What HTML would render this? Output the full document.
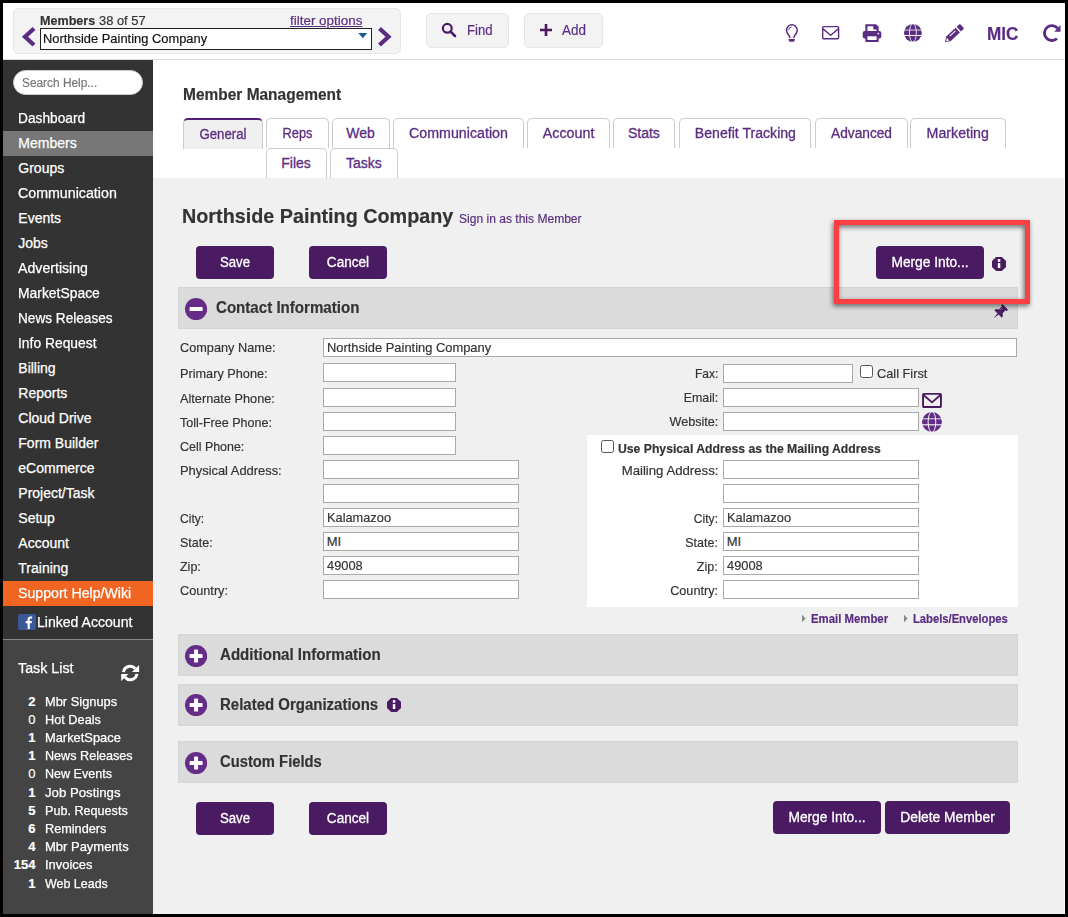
<!DOCTYPE html>
<html lang="en"><head><meta charset="utf-8"><title>Member Management</title>
<style>
html,body{margin:0;padding:0;}
body{width:1068px;height:917px;background:#000;position:relative;overflow:hidden;font-family:"Liberation Sans",sans-serif;}
.t{position:absolute;white-space:nowrap;-webkit-text-stroke-width:.18px;}
.sb,.tk{-webkit-text-stroke-width:.25px;}
.tab,.btn{-webkit-text-stroke-width:.3px;}
</style></head><body>
<div style="position:absolute;left:3px;top:3px;width:1062px;height:911px;background:#fff;"></div>
<div style="position:absolute;left:3px;top:59px;width:1061px;height:1px;background:#d9d9d9;"></div>
<div style="position:absolute;left:153px;top:178px;width:911px;height:736px;background:#f0f0f0;"></div>
<div style="position:absolute;left:3px;top:60px;width:150px;height:580px;background:#333;"></div>
<div style="position:absolute;left:3px;top:640px;width:150px;height:274px;background:#444;"></div>
<div style="position:absolute;left:3px;top:639px;width:150px;height:1px;background:#888;"></div>
<div style="position:absolute;left:13px;top:8px;width:388px;height:46px;box-sizing:border-box;background:#f3f3f3;border:1px solid #e6e6e6;border-radius:5px;"></div>
<svg style="position:absolute;left:20px;top:25px" width="18" height="24" viewBox="0 0 18 24"><polyline points="14,3.5 5,11.8 14,20" fill="none" stroke="#5b2d82" stroke-width="4.2"/></svg>
<svg style="position:absolute;left:375px;top:25px" width="18" height="24" viewBox="0 0 18 24"><polyline points="4.5,3.5 13.5,11.8 4.5,20" fill="none" stroke="#5b2d82" stroke-width="4.2"/></svg>
<div class="t" style="left:40.0px;top:11.60px;font-size:13px;line-height:17px;font-weight:bold;color:#333;transform:scaleX(0.9671);transform-origin:left center;">Members</div>
<div class="t" style="left:99.3px;top:11.60px;font-size:13px;line-height:17px;font-weight:normal;color:#333;transform:scaleX(0.9915);transform-origin:left center;">38 of 57</div>
<div class="t" style="left:290px;top:11.60px;font-size:13px;line-height:17px;font-weight:normal;color:#5b2d82;text-decoration:underline;transform:scaleX(1.0329);transform-origin:left center;">filter options</div>
<div style="position:absolute;left:40px;top:28px;width:332px;height:22px;box-sizing:border-box;background:#fff;border:1px solid #222;"></div>
<div class="t" style="left:43.3px;top:29.90px;font-size:13px;line-height:17px;font-weight:normal;color:#111;transform:scaleX(0.9916);transform-origin:left center;">Northside Painting Company</div>
<svg style="position:absolute;left:358px;top:33px" width="10" height="6" viewBox="0 0 10 6"><polygon points="0.3,0 9.3,0 4.8,5.2" fill="#14608f"/></svg>
<div style="position:absolute;left:426px;top:13px;width:83px;height:35px;box-sizing:border-box;background:#f3f3f3;border:1px solid #e6e6e6;border-radius:5px;"></div>
<div style="position:absolute;left:524px;top:13px;width:79px;height:35px;box-sizing:border-box;background:#f3f3f3;border:1px solid #e6e6e6;border-radius:5px;"></div>
<svg style="position:absolute;left:441px;top:22px" width="16" height="16" viewBox="0 0 16 16"><circle cx="6.3" cy="6.3" r="4.4" fill="none" stroke="#4a1b63" stroke-width="2.2"/><line x1="9.6" y1="9.6" x2="14" y2="14" stroke="#4a1b63" stroke-width="2.6" stroke-linecap="round"/></svg>
<div class="t" style="left:466.6px;top:21.15px;font-size:14px;line-height:18px;font-weight:normal;color:#5b2d82;transform:scaleX(0.9400);transform-origin:left center;">Find</div>
<svg style="position:absolute;left:539px;top:23px" width="14" height="14" viewBox="0 0 14 14"><path d="M7 1v12M1 7h12" stroke="#4a1b63" stroke-width="2.6" fill="none"/></svg>
<div class="t" style="left:562.4px;top:21.15px;font-size:14px;line-height:18px;font-weight:normal;color:#5b2d82;transform:scaleX(0.9630);transform-origin:left center;">Add</div>
<svg style="position:absolute;left:784px;top:23px" width="16" height="20" viewBox="0 0 16 20"><path d="M5.900 14.900C5.900 12.300 2.520 11 2.520 7.200A5.350 5.350 0 0 1 13.220 7.200C13.220 11 9.800 12.300 9.800 14.900" fill="none" stroke="#5b2d82" stroke-width="1.500"/><path d="M4.500 16h6.500l-.6 2.100c-.1.400-.5.600-.9.600h-3.500c-.4 0-.8-.2-.9-.6z" fill="#5b2d82"/><path d="M4.600 7.200A3.300 3.300 0 0 1 7.600 4" fill="none" stroke="#5b2d82" stroke-width=".9"/></svg>
<svg style="position:absolute;left:820px;top:25.300px" width="22" height="16" viewBox="0 0 22 16"><rect x="2.700" y="1.600" width="15.900" height="12.200" rx="1" fill="none" stroke="#5b2d82" stroke-width="1.400"/><path d="M3 3.900l7.650 6.300 7.650-6.300" fill="none" stroke="#5b2d82" stroke-width="1.400" stroke-linejoin="round"/></svg>
<svg style="position:absolute;left:862px;top:23px" width="20" height="20" viewBox="0 0 20 20"><path d="M4.400 8.500v-6.300h9.200l2 2v4.300" fill="none" stroke="#5b2d82" stroke-width="2.100"/><path d="M11.300 2.200h2.300l2 2v2.200h-4.300z" fill="#5b2d82"/><rect x="0.700" y="8" width="18.600" height="7.600" rx="2" fill="#5b2d82"/><rect x="4.400" y="12.300" width="11.200" height="5.700" fill="#fff" stroke="#5b2d82" stroke-width="2"/><circle cx="16.300" cy="10.600" r="0.900" fill="#fff"/></svg>
<svg style="position:absolute;left:904px;top:24.2px" width="17.8" height="17.8" viewBox="0 0 20 20"><circle cx="10" cy="10" r="10" fill="#5b2d82"/><g fill="none" stroke="#fff"><ellipse cx="10" cy="10" rx="3.850" ry="10.400" stroke-width=".95"/><path d="M0 6.800h20" stroke-width="1.200" stroke-opacity=".7"/><path d="M0 12.900h20" stroke-width="1.100"/></g></svg>
<svg style="position:absolute;left:945.200px;top:41.700px;overflow:visible" width="1" height="1"><g transform="rotate(-43)"><path d="M0 0L4.600-3.150H17.400V3.150H4.600z" fill="#5b2d82"/><path d="M18.900-3.150h3.200c.700 0 1.250.550 1.250 1.250v3.800c0 .700-.550 1.250-1.250 1.250h-3.200z" fill="#5b2d82"/><path d="M1.900-.250L4.300-1.900V1.900L1.900.250z" fill="#fff"/><path d="M7.400-1.050h7.800" stroke="#fff" stroke-width=".95" fill="none"/></g></svg>
<div class="t" style="left:986.7px;top:22.56px;font-size:18px;line-height:23px;font-weight:bold;color:#5b2d82;transform:scaleX(0.9545);transform-origin:left center;">MIC</div>
<svg style="position:absolute;left:1042px;top:23px" width="20" height="20" viewBox="0 0 20 20"><path d="M14.980 15.550A7.450 7.450 0 1 1 15.600 5.300" fill="none" stroke="#5b2d82" stroke-width="2.900"/><path d="M18.500 2v6.700h-6.200z" fill="#5b2d82"/></svg>
<div style="position:absolute;left:13.4px;top:70.1px;width:129.2px;height:25.4px;box-sizing:border-box;background:#fff;border:1px solid #ccc;border-radius:13px;"></div>
<div class="t" style="left:22.3px;top:75.24px;font-size:12px;line-height:16px;font-weight:normal;color:#777;transform:scaleX(0.9889);transform-origin:left center;">Search Help...</div>
<div style="position:absolute;left:3px;top:131px;width:150px;height:25px;background:#777;"></div>
<div style="position:absolute;left:3px;top:581px;width:150px;height:25px;background:#f06522;"></div>
<div class="t sb" style="left:18.3px;top:109.35px;font-size:14px;line-height:18px;font-weight:normal;color:#fff;transform:scaleX(0.9796);transform-origin:left center;">Dashboard</div>
<div class="t sb" style="left:18.3px;top:134.35px;font-size:14px;line-height:18px;font-weight:normal;color:#fff;">Members</div>
<div class="t sb" style="left:18.3px;top:159.35px;font-size:14px;line-height:18px;font-weight:normal;color:#fff;">Groups</div>
<div class="t sb" style="left:18.3px;top:184.35px;font-size:14px;line-height:18px;font-weight:normal;color:#fff;transform:scaleX(1.0158);transform-origin:left center;">Communication</div>
<div class="t sb" style="left:18.3px;top:209.35px;font-size:14px;line-height:18px;font-weight:normal;color:#fff;">Events</div>
<div class="t sb" style="left:18.3px;top:234.35px;font-size:14px;line-height:18px;font-weight:normal;color:#fff;">Jobs</div>
<div class="t sb" style="left:18.3px;top:259.35px;font-size:14px;line-height:18px;font-weight:normal;color:#fff;transform:scaleX(1.0106);transform-origin:left center;">Advertising</div>
<div class="t sb" style="left:18.3px;top:284.35px;font-size:14px;line-height:18px;font-weight:normal;color:#fff;transform:scaleX(0.9917);transform-origin:left center;">MarketSpace</div>
<div class="t sb" style="left:18.3px;top:309.35px;font-size:14px;line-height:18px;font-weight:normal;color:#fff;transform:scaleX(0.9726);transform-origin:left center;">News Releases</div>
<div class="t sb" style="left:18.3px;top:334.35px;font-size:14px;line-height:18px;font-weight:normal;color:#fff;transform:scaleX(0.9888);transform-origin:left center;">Info Request</div>
<div class="t sb" style="left:18.3px;top:359.35px;font-size:14px;line-height:18px;font-weight:normal;color:#fff;">Billing</div>
<div class="t sb" style="left:18.3px;top:384.35px;font-size:14px;line-height:18px;font-weight:normal;color:#fff;">Reports</div>
<div class="t sb" style="left:18.3px;top:409.35px;font-size:14px;line-height:18px;font-weight:normal;color:#fff;">Cloud Drive</div>
<div class="t sb" style="left:18.3px;top:434.35px;font-size:14px;line-height:18px;font-weight:normal;color:#fff;">Form Builder</div>
<div class="t sb" style="left:18.3px;top:459.35px;font-size:14px;line-height:18px;font-weight:normal;color:#fff;">eCommerce</div>
<div class="t sb" style="left:18.3px;top:484.35px;font-size:14px;line-height:18px;font-weight:normal;color:#fff;">Project/Task</div>
<div class="t sb" style="left:18.3px;top:509.35px;font-size:14px;line-height:18px;font-weight:normal;color:#fff;">Setup</div>
<div class="t sb" style="left:18.3px;top:534.35px;font-size:14px;line-height:18px;font-weight:normal;color:#fff;">Account</div>
<div class="t sb" style="left:18.3px;top:559.35px;font-size:14px;line-height:18px;font-weight:normal;color:#fff;">Training</div>
<div class="t sb" style="left:18.3px;top:584.35px;font-size:14px;line-height:18px;font-weight:normal;color:#fff;transform:scaleX(1.0103);transform-origin:left center;">Support Help/Wiki</div>
<div style="position:absolute;left:18px;top:614px;width:18px;height:16px;background:#3b5998;border-radius:2px;"><svg width="18" height="16" viewBox="0 0 18 16"><path d="M9.600 15v-5.700h-1.900v-2.200h1.900v-1.700c0-1.900 1.100-3 2.800-3 .8 0 1.500.1 1.700.1v2h-1.200c-.9 0-1.100.5-1.100 1.100v1.500h2.200l-.3 2.200h-1.900v5.700z" fill="#fff"/></svg></div>
<div class="t sb" style="left:37.3px;top:612.95px;font-size:14px;line-height:18px;font-weight:normal;color:#fff;transform:scaleX(1.0045);transform-origin:left center;">Linked Account</div>
<div class="t sb" style="left:18.3px;top:658.95px;font-size:14px;line-height:18px;font-weight:normal;color:#fff;transform:scaleX(1.0189);transform-origin:left center;">Task List</div>
<svg style="position:absolute;left:121px;top:664px" width="19" height="18" viewBox="0 0 19 18"><g fill="none" stroke="#fff" stroke-width="3"><path d="M2.500 8.100A6.700 6.700 0 0 1 14.330 4.690"/><path d="M15.900 9.900A6.700 6.700 0 0 1 4.070 13.310"/></g><path d="M18.100.900v7.100h-7.100z" fill="#fff"/><path d="M.200 17.100v-7h7.200z" fill="#fff"/></svg>
<div class="t" style="right:1032.6px;top:692.60px;font-size:13px;line-height:17px;font-weight:bold;color:#fff;">2</div>
<div class="t tk" style="left:45.3px;top:692.60px;font-size:13px;line-height:17px;font-weight:normal;color:#fff;transform:scaleX(0.9893);transform-origin:left center;">Mbr Signups</div>
<div class="t" style="right:1032.6px;top:710.80px;font-size:13px;line-height:17px;font-weight:normal;color:#fff;">0</div>
<div class="t tk" style="left:45.3px;top:710.80px;font-size:13px;line-height:17px;font-weight:normal;color:#fff;transform:scaleX(0.9794);transform-origin:left center;">Hot Deals</div>
<div class="t" style="right:1032.6px;top:729.00px;font-size:13px;line-height:17px;font-weight:bold;color:#fff;">1</div>
<div class="t tk" style="left:45.3px;top:729.00px;font-size:13px;line-height:17px;font-weight:normal;color:#fff;transform:scaleX(0.9896);transform-origin:left center;">MarketSpace</div>
<div class="t" style="right:1032.6px;top:747.20px;font-size:13px;line-height:17px;font-weight:bold;color:#fff;">1</div>
<div class="t tk" style="left:45.3px;top:747.20px;font-size:13px;line-height:17px;font-weight:normal;color:#fff;transform:scaleX(0.9698);transform-origin:left center;">News Releases</div>
<div class="t" style="right:1032.6px;top:765.40px;font-size:13px;line-height:17px;font-weight:normal;color:#fff;">0</div>
<div class="t tk" style="left:45.3px;top:765.40px;font-size:13px;line-height:17px;font-weight:normal;color:#fff;transform:scaleX(0.9658);transform-origin:left center;">New Events</div>
<div class="t" style="right:1032.6px;top:783.60px;font-size:13px;line-height:17px;font-weight:bold;color:#fff;">1</div>
<div class="t tk" style="left:45.3px;top:783.60px;font-size:13px;line-height:17px;font-weight:normal;color:#fff;transform:scaleX(1.0143);transform-origin:left center;">Job Postings</div>
<div class="t" style="right:1032.6px;top:801.80px;font-size:13px;line-height:17px;font-weight:bold;color:#fff;">5</div>
<div class="t tk" style="left:45.3px;top:801.80px;font-size:13px;line-height:17px;font-weight:normal;color:#fff;transform:scaleX(0.9697);transform-origin:left center;">Pub. Requests</div>
<div class="t" style="right:1032.6px;top:820.00px;font-size:13px;line-height:17px;font-weight:bold;color:#fff;">6</div>
<div class="t tk" style="left:45.3px;top:820.00px;font-size:13px;line-height:17px;font-weight:normal;color:#fff;transform:scaleX(0.9752);transform-origin:left center;">Reminders</div>
<div class="t" style="right:1032.6px;top:838.20px;font-size:13px;line-height:17px;font-weight:bold;color:#fff;">4</div>
<div class="t tk" style="left:45.3px;top:838.20px;font-size:13px;line-height:17px;font-weight:normal;color:#fff;transform:scaleX(0.9987);transform-origin:left center;">Mbr Payments</div>
<div class="t" style="right:1032.6px;top:856.40px;font-size:13px;line-height:17px;font-weight:bold;color:#fff;">154</div>
<div class="t tk" style="left:45.3px;top:856.40px;font-size:13px;line-height:17px;font-weight:normal;color:#fff;transform:scaleX(0.9936);transform-origin:left center;">Invoices</div>
<div class="t" style="right:1032.6px;top:874.60px;font-size:13px;line-height:17px;font-weight:bold;color:#fff;">1</div>
<div class="t tk" style="left:45.3px;top:874.60px;font-size:13px;line-height:17px;font-weight:normal;color:#fff;transform:scaleX(0.9583);transform-origin:left center;">Web Leads</div>
<div class="t" style="left:182.7px;top:83.66px;font-size:16px;line-height:21px;font-weight:bold;color:#333;transform:scaleX(0.9670);transform-origin:left center;">Member Management</div>
<div style="position:absolute;left:183px;top:118px;width:80px;height:31px;box-sizing:border-box;background:#f0f0f0;border:1px solid #ccc;border-bottom:none;border-top:2px solid #521f78;border-radius:5px 5px 0 0;"></div>
<div class="t tab" style="left:183px;width:80px;text-align:center;top:124.65px;font-size:14px;line-height:18px;font-weight:normal;color:#5b2d82;transform:scaleX(0.9455);transform-origin:center center;">General</div>
<div style="position:absolute;left:265.5px;top:118px;width:63.0px;height:30px;box-sizing:border-box;background:#fff;border:1px solid #ccc;border-bottom:none;border-radius:5px 5px 0 0;"></div>
<div class="t tab" style="left:265.5px;width:63.0px;text-align:center;top:123.75px;font-size:14px;line-height:18px;font-weight:normal;color:#5b2d82;transform:scaleX(0.9147);transform-origin:center center;">Reps</div>
<div style="position:absolute;left:331.5px;top:118px;width:58.0px;height:30px;box-sizing:border-box;background:#fff;border:1px solid #ccc;border-bottom:none;border-radius:5px 5px 0 0;"></div>
<div class="t tab" style="left:331.5px;width:58.0px;text-align:center;top:123.75px;font-size:14px;line-height:18px;font-weight:normal;color:#5b2d82;">Web</div>
<div style="position:absolute;left:392.5px;top:118px;width:131.0px;height:30px;box-sizing:border-box;background:#fff;border:1px solid #ccc;border-bottom:none;border-radius:5px 5px 0 0;"></div>
<div class="t tab" style="left:392.5px;width:131.0px;text-align:center;top:123.75px;font-size:14px;line-height:18px;font-weight:normal;color:#5b2d82;transform:scaleX(1.0158);transform-origin:center center;">Communication</div>
<div style="position:absolute;left:526.5px;top:118px;width:83.20000000000005px;height:30px;box-sizing:border-box;background:#fff;border:1px solid #ccc;border-bottom:none;border-radius:5px 5px 0 0;"></div>
<div class="t tab" style="left:526.5px;width:83.20000000000005px;text-align:center;top:123.75px;font-size:14px;line-height:18px;font-weight:normal;color:#5b2d82;transform:scaleX(1.0199);transform-origin:center center;">Account</div>
<div style="position:absolute;left:612.6px;top:118px;width:62.60000000000002px;height:30px;box-sizing:border-box;background:#fff;border:1px solid #ccc;border-bottom:none;border-radius:5px 5px 0 0;"></div>
<div class="t tab" style="left:612.6px;width:62.60000000000002px;text-align:center;top:123.75px;font-size:14px;line-height:18px;font-weight:normal;color:#5b2d82;">Stats</div>
<div style="position:absolute;left:678.5px;top:118px;width:132.79999999999995px;height:30px;box-sizing:border-box;background:#fff;border:1px solid #ccc;border-bottom:none;border-radius:5px 5px 0 0;"></div>
<div class="t tab" style="left:678.5px;width:132.79999999999995px;text-align:center;top:123.75px;font-size:14px;line-height:18px;font-weight:normal;color:#5b2d82;transform:scaleX(1.0071);transform-origin:center center;">Benefit Tracking</div>
<div style="position:absolute;left:814.7px;top:118px;width:93.0px;height:30px;box-sizing:border-box;background:#fff;border:1px solid #ccc;border-bottom:none;border-radius:5px 5px 0 0;"></div>
<div class="t tab" style="left:814.7px;width:93.0px;text-align:center;top:123.75px;font-size:14px;line-height:18px;font-weight:normal;color:#5b2d82;transform:scaleX(0.9794);transform-origin:center center;">Advanced</div>
<div style="position:absolute;left:910.3px;top:118px;width:95.5px;height:30px;box-sizing:border-box;background:#fff;border:1px solid #ccc;border-bottom:none;border-radius:5px 5px 0 0;"></div>
<div class="t tab" style="left:910.3px;width:95.5px;text-align:center;top:123.75px;font-size:14px;line-height:18px;font-weight:normal;color:#5b2d82;transform:scaleX(1.0135);transform-origin:center center;">Marketing</div>
<div style="position:absolute;left:265.5px;top:148px;width:61.0px;height:30px;box-sizing:border-box;background:#fff;border:1px solid #ccc;border-bottom:none;border-radius:5px 5px 0 0;"></div>
<div class="t tab" style="left:265.5px;width:61.0px;text-align:center;top:153.75px;font-size:14px;line-height:18px;font-weight:normal;color:#5b2d82;">Files</div>
<div style="position:absolute;left:329.7px;top:148px;width:68.30000000000001px;height:30px;box-sizing:border-box;background:#fff;border:1px solid #ccc;border-bottom:none;border-radius:5px 5px 0 0;"></div>
<div class="t tab" style="left:329.7px;width:68.30000000000001px;text-align:center;top:153.75px;font-size:14px;line-height:18px;font-weight:normal;color:#5b2d82;">Tasks</div>
<div class="t ttl" style="left:182.1px;top:202.22px;font-size:21px;line-height:27px;font-weight:bold;color:#333;transform:scaleX(0.9414);transform-origin:left center;">Northside Painting Company</div>
<div class="t sgn" style="left:459.1px;top:211.04px;font-size:12px;line-height:16px;font-weight:normal;color:#5b2d82;transform:scaleX(1.0044);transform-origin:left center;">Sign in as this Member</div>
<div style="position:absolute;left:196px;top:246px;width:78px;height:33px;background:#4a1b63;border-radius:4px;"></div>
<div class="t btn" style="left:196px;width:78px;text-align:center;top:253.20px;font-size:14px;line-height:18px;font-weight:normal;color:#fff;transform:scaleX(0.9429);transform-origin:center center;">Save</div>
<div style="position:absolute;left:309px;top:246px;width:78px;height:33px;background:#4a1b63;border-radius:4px;"></div>
<div class="t btn" style="left:309px;width:78px;text-align:center;top:253.20px;font-size:14px;line-height:18px;font-weight:normal;color:#fff;transform:scaleX(0.9703);transform-origin:center center;">Cancel</div>
<div style="position:absolute;left:178px;top:287px;width:840px;height:42px;box-sizing:border-box;background:#dbdbdb;border:1px solid #d5d5d5;"></div>
<div style="position:absolute;left:178px;top:634px;width:840px;height:42px;box-sizing:border-box;background:#dbdbdb;border:1px solid #d5d5d5;"></div>
<div style="position:absolute;left:178px;top:684px;width:840px;height:42px;box-sizing:border-box;background:#dbdbdb;border:1px solid #d5d5d5;"></div>
<div style="position:absolute;left:178px;top:741px;width:840px;height:42px;box-sizing:border-box;background:#dbdbdb;border:1px solid #d5d5d5;"></div>
<svg style="position:absolute;left:185px;top:297.9px" width="22.200" height="22.200" viewBox="0 0 22.200 22.200"><circle cx="11.100" cy="11.100" r="11.100" fill="#662d88"/><rect x="4.600" y="9.100" width="13" height="4" rx=".6" fill="#fff"/></svg>
<svg style="position:absolute;left:185px;top:644.9px" width="22.200" height="22.200" viewBox="0 0 22.200 22.200"><circle cx="11.100" cy="11.100" r="11.100" fill="#662d88"/><rect x="4.600" y="9.100" width="13" height="4" rx=".6" fill="#fff"/><rect x="9.100" y="4.600" width="4" height="13" rx=".6" fill="#fff"/></svg>
<svg style="position:absolute;left:185px;top:693.9px" width="22.200" height="22.200" viewBox="0 0 22.200 22.200"><circle cx="11.100" cy="11.100" r="11.100" fill="#662d88"/><rect x="4.600" y="9.100" width="13" height="4" rx=".6" fill="#fff"/><rect x="9.100" y="4.600" width="4" height="13" rx=".6" fill="#fff"/></svg>
<svg style="position:absolute;left:185px;top:751.6px" width="22.200" height="22.200" viewBox="0 0 22.200 22.200"><circle cx="11.100" cy="11.100" r="11.100" fill="#662d88"/><rect x="4.600" y="9.100" width="13" height="4" rx=".6" fill="#fff"/><rect x="9.100" y="4.600" width="4" height="13" rx=".6" fill="#fff"/></svg>
<div class="t sec" style="left:215.9px;top:296.76px;font-size:16px;line-height:21px;font-weight:bold;color:#333;transform:scaleX(0.9434);transform-origin:left center;">Contact Information</div>
<div class="t sec" style="left:219.7px;top:644.06px;font-size:16px;line-height:21px;font-weight:bold;color:#333;transform:scaleX(0.9417);transform-origin:left center;">Additional Information</div>
<div class="t sec" style="left:219.7px;top:693.96px;font-size:16px;line-height:21px;font-weight:bold;color:#333;transform:scaleX(0.9365);transform-origin:left center;">Related Organizations</div>
<div class="t sec" style="left:219.7px;top:750.66px;font-size:16px;line-height:21px;font-weight:bold;color:#333;transform:scaleX(0.9235);transform-origin:left center;">Custom Fields</div>
<svg style="position:absolute;left:387px;top:698.2px" width="14" height="14" viewBox="0 0 14 14"><polygon points="4.100,0 9.900,0 14,4.100 14,9.900 9.900,14 4.100,14 0,9.900 0,4.100" fill="#4a1b63"/><rect x="5.800" y="2.100" width="2.500" height="2.700" fill="#fff"/><rect x="5.800" y="6.100" width="2.500" height="4.900" fill="#fff"/></svg>
<svg style="position:absolute;left:989.700px;top:303px" width="19" height="19" viewBox="0 0 20 20"><g transform="rotate(45 10 10)" fill="#4a1b63"><rect x="5.700" y="1.500" width="8.600" height="2.300" rx="0.800"/><rect x="7.200" y="3.500" width="5.600" height="5.400"/><path d="M4.400 12.100c0-2.300 1.900-3.700 3.300-3.700h4.600c1.400 0 3.300 1.400 3.300 3.700z"/><path d="M9.100 12h1.800l-.9 6.600z"/><path d="M8.700 4.600v3.400" stroke="#fff" stroke-opacity=".75" stroke-width=".8" stroke-dasharray="1 .7" fill="none"/></g></svg>
<div class="t lb" style="left:180px;top:339.10px;font-size:13px;line-height:17px;font-weight:normal;color:#333;transform:scaleX(0.9790);transform-origin:left center;">Company Name:</div>
<div class="t lb" style="left:180px;top:364.60px;font-size:13px;line-height:17px;font-weight:normal;color:#333;transform:scaleX(0.9777);transform-origin:left center;">Primary Phone:</div>
<div class="t lb" style="left:180px;top:389.60px;font-size:13px;line-height:17px;font-weight:normal;color:#333;transform:scaleX(0.9798);transform-origin:left center;">Alternate Phone:</div>
<div class="t lb" style="left:180px;top:413.60px;font-size:13px;line-height:17px;font-weight:normal;color:#333;transform:scaleX(0.9634);transform-origin:left center;">Toll-Free Phone:</div>
<div class="t lb" style="left:180px;top:437.60px;font-size:13px;line-height:17px;font-weight:normal;color:#333;transform:scaleX(0.9566);transform-origin:left center;">Cell Phone:</div>
<div class="t lb" style="left:180px;top:461.60px;font-size:13px;line-height:17px;font-weight:normal;color:#333;transform:scaleX(0.9911);transform-origin:left center;">Physical Address:</div>
<div class="t lb" style="left:180px;top:509.60px;font-size:13px;line-height:17px;font-weight:normal;color:#333;transform:scaleX(0.9308);transform-origin:left center;">City:</div>
<div class="t lb" style="left:180px;top:533.60px;font-size:13px;line-height:17px;font-weight:normal;color:#333;transform:scaleX(0.9626);transform-origin:left center;">State:</div>
<div class="t lb" style="left:180px;top:557.60px;font-size:13px;line-height:17px;font-weight:normal;color:#333;transform:scaleX(0.9598);transform-origin:left center;">Zip:</div>
<div class="t lb" style="left:180px;top:581.60px;font-size:13px;line-height:17px;font-weight:normal;color:#333;transform:scaleX(0.9768);transform-origin:left center;">Country:</div>
<div style="position:absolute;left:323px;top:338px;width:694px;height:19px;box-sizing:border-box;background:#fff;border:1px solid #a9a9a9;"></div>
<div class="t iv" style="left:326.7px;top:339.00px;font-size:13px;line-height:17px;font-weight:normal;color:#333;transform:scaleX(0.9916);transform-origin:left center;">Northside Painting Company</div>
<div style="position:absolute;left:323px;top:363px;width:133px;height:19px;box-sizing:border-box;background:#fff;border:1px solid #a9a9a9;"></div>
<div style="position:absolute;left:323px;top:388px;width:133px;height:19px;box-sizing:border-box;background:#fff;border:1px solid #a9a9a9;"></div>
<div style="position:absolute;left:323px;top:412px;width:133px;height:19px;box-sizing:border-box;background:#fff;border:1px solid #a9a9a9;"></div>
<div style="position:absolute;left:323px;top:436px;width:133px;height:19px;box-sizing:border-box;background:#fff;border:1px solid #a9a9a9;"></div>
<div style="position:absolute;left:323px;top:460px;width:196px;height:19px;box-sizing:border-box;background:#fff;border:1px solid #a9a9a9;"></div>
<div style="position:absolute;left:323px;top:484px;width:196px;height:19px;box-sizing:border-box;background:#fff;border:1px solid #a9a9a9;"></div>
<div style="position:absolute;left:323px;top:508px;width:196px;height:19px;box-sizing:border-box;background:#fff;border:1px solid #a9a9a9;"></div>
<div class="t iv" style="left:326.7px;top:509.00px;font-size:13px;line-height:17px;font-weight:normal;color:#333;transform:scaleX(0.9839);transform-origin:left center;">Kalamazoo</div>
<div style="position:absolute;left:323px;top:532px;width:196px;height:19px;box-sizing:border-box;background:#fff;border:1px solid #a9a9a9;"></div>
<div class="t iv" style="left:326.7px;top:533.00px;font-size:13px;line-height:17px;font-weight:normal;color:#333;">MI</div>
<div style="position:absolute;left:323px;top:556px;width:196px;height:19px;box-sizing:border-box;background:#fff;border:1px solid #a9a9a9;"></div>
<div class="t iv" style="left:326.7px;top:557.00px;font-size:13px;line-height:17px;font-weight:normal;color:#333;transform:scaleX(0.9874);transform-origin:left center;">49008</div>
<div style="position:absolute;left:323px;top:580px;width:196px;height:19px;box-sizing:border-box;background:#fff;border:1px solid #a9a9a9;"></div>
<div class="t lb" style="right:350px;top:364.90px;font-size:13px;line-height:17px;font-weight:normal;color:#333;transform:scaleX(0.9250);transform-origin:right center;">Fax:</div>
<div class="t lb" style="right:350px;top:388.90px;font-size:13px;line-height:17px;font-weight:normal;color:#333;transform:scaleX(0.9550);transform-origin:right center;">Email:</div>
<div class="t lb" style="right:350px;top:412.90px;font-size:13px;line-height:17px;font-weight:normal;color:#333;transform:scaleX(0.9693);transform-origin:right center;">Website:</div>
<div style="position:absolute;left:723px;top:364px;width:130px;height:19px;box-sizing:border-box;background:#fff;border:1px solid #a9a9a9;"></div>
<div style="position:absolute;left:723px;top:388px;width:196px;height:19px;box-sizing:border-box;background:#fff;border:1px solid #a9a9a9;"></div>
<div style="position:absolute;left:723px;top:412px;width:196px;height:19px;box-sizing:border-box;background:#fff;border:1px solid #a9a9a9;"></div>
<div style="position:absolute;left:860px;top:365px;width:13px;height:13px;box-sizing:border-box;background:#fff;border:1px solid #555;border-radius:2.500px;"></div>
<div class="t lb" style="left:876.7px;top:365.00px;font-size:13px;line-height:17px;font-weight:normal;color:#333;transform:scaleX(0.9809);transform-origin:left center;">Call First</div>
<svg style="position:absolute;left:921px;top:392px" width="22" height="17" viewBox="0 0 22 17"><rect x="2.050" y="1.850" width="17.900" height="13.200" rx=".8" fill="none" stroke="#4a1b63" stroke-width="1.900"/><path d="M2.600 3l8.400 7.400 8.400-7.400" fill="none" stroke="#4a1b63" stroke-width="1.800" stroke-linejoin="round"/></svg>
<svg style="position:absolute;left:922.1px;top:412.2px" width="19.9" height="19.9" viewBox="0 0 20 20"><circle cx="10" cy="10" r="10" fill="#612b86"/><g fill="none" stroke="#fff"><ellipse cx="10" cy="10" rx="3.850" ry="10.400" stroke-width=".95"/><path d="M0 6.800h20" stroke-width="1.200" stroke-opacity=".7"/><path d="M0 12.900h20" stroke-width="1.100"/></g></svg>
<div style="position:absolute;left:587px;top:435px;width:431px;height:171.5px;background:#fff;"></div>
<div style="position:absolute;left:601px;top:440px;width:13px;height:13px;box-sizing:border-box;background:#fff;border:1px solid #555;border-radius:2.500px;"></div>
<div class="t upa" style="left:617.7px;top:440.30px;font-size:13px;line-height:17px;font-weight:bold;color:#333;transform:scaleX(0.9386);transform-origin:left center;">Use Physical Address as the Mailing Address</div>
<div class="t lb" style="right:350px;top:461.60px;font-size:13px;line-height:17px;font-weight:normal;color:#333;transform:scaleX(1.0137);transform-origin:right center;">Mailing Address:</div>
<div class="t lb" style="right:350px;top:509.60px;font-size:13px;line-height:17px;font-weight:normal;color:#333;transform:scaleX(0.9308);transform-origin:right center;">City:</div>
<div class="t lb" style="right:350px;top:533.60px;font-size:13px;line-height:17px;font-weight:normal;color:#333;transform:scaleX(0.9626);transform-origin:right center;">State:</div>
<div class="t lb" style="right:350px;top:557.60px;font-size:13px;line-height:17px;font-weight:normal;color:#333;transform:scaleX(0.9598);transform-origin:right center;">Zip:</div>
<div class="t lb" style="right:350px;top:581.60px;font-size:13px;line-height:17px;font-weight:normal;color:#333;transform:scaleX(0.9768);transform-origin:right center;">Country:</div>
<div style="position:absolute;left:723px;top:460px;width:196px;height:19px;box-sizing:border-box;background:#fff;border:1px solid #a9a9a9;"></div>
<div style="position:absolute;left:723px;top:484px;width:196px;height:19px;box-sizing:border-box;background:#fff;border:1px solid #a9a9a9;"></div>
<div style="position:absolute;left:723px;top:508px;width:196px;height:19px;box-sizing:border-box;background:#fff;border:1px solid #a9a9a9;"></div>
<div class="t iv" style="left:726.7px;top:509.00px;font-size:13px;line-height:17px;font-weight:normal;color:#333;transform:scaleX(0.9839);transform-origin:left center;">Kalamazoo</div>
<div style="position:absolute;left:723px;top:532px;width:196px;height:19px;box-sizing:border-box;background:#fff;border:1px solid #a9a9a9;"></div>
<div class="t iv" style="left:726.7px;top:533.00px;font-size:13px;line-height:17px;font-weight:normal;color:#333;">MI</div>
<div style="position:absolute;left:723px;top:556px;width:196px;height:19px;box-sizing:border-box;background:#fff;border:1px solid #a9a9a9;"></div>
<div class="t iv" style="left:726.7px;top:557.00px;font-size:13px;line-height:17px;font-weight:normal;color:#333;transform:scaleX(0.9874);transform-origin:left center;">49008</div>
<div style="position:absolute;left:723px;top:580px;width:196px;height:19px;box-sizing:border-box;background:#fff;border:1px solid #a9a9a9;"></div>
<svg style="position:absolute;left:801px;top:614px" width="6" height="9" viewBox="0 0 6 9"><polygon points="1,0.800 4.600,4.500 1,8.200" fill="#888"/></svg>
<div class="t lnk" style="left:810.5px;top:611.04px;font-size:12px;line-height:16px;font-weight:bold;color:#5b2d82;transform:scaleX(0.9475);transform-origin:left center;">Email Member</div>
<svg style="position:absolute;left:903px;top:614px" width="6" height="9" viewBox="0 0 6 9"><polygon points="1,0.800 4.600,4.500 1,8.200" fill="#888"/></svg>
<div class="t lnk" style="left:912.5px;top:611.04px;font-size:12px;line-height:16px;font-weight:bold;color:#5b2d82;transform:scaleX(0.9342);transform-origin:left center;">Labels/Envelopes</div>
<div style="position:absolute;left:196px;top:802px;width:78px;height:33px;background:#4a1b63;border-radius:4px;"></div>
<div class="t btn" style="left:196px;width:78px;text-align:center;top:809.20px;font-size:14px;line-height:18px;font-weight:normal;color:#fff;transform:scaleX(0.9429);transform-origin:center center;">Save</div>
<div style="position:absolute;left:309px;top:802px;width:78px;height:33px;background:#4a1b63;border-radius:4px;"></div>
<div class="t btn" style="left:309px;width:78px;text-align:center;top:809.20px;font-size:14px;line-height:18px;font-weight:normal;color:#fff;transform:scaleX(0.9703);transform-origin:center center;">Cancel</div>
<div style="position:absolute;left:773px;top:801px;width:108px;height:33px;background:#4a1b63;border-radius:4px;"></div>
<div class="t btn" style="left:773px;width:108px;text-align:center;top:808.20px;font-size:14px;line-height:18px;font-weight:normal;color:#fff;transform:scaleX(0.9810);transform-origin:center center;">Merge Into...</div>
<div style="position:absolute;left:885px;top:801px;width:125px;height:33px;background:#4a1b63;border-radius:4px;"></div>
<div class="t btn" style="left:885px;width:125px;text-align:center;top:808.20px;font-size:14px;line-height:18px;font-weight:normal;color:#fff;transform:scaleX(0.9874);transform-origin:center center;">Delete Member</div>
<div style="position:absolute;left:876px;top:246px;width:108px;height:33px;background:#4a1b63;border-radius:4px;"></div>
<div class="t btn" style="left:876px;width:108px;text-align:center;top:253.20px;font-size:14px;line-height:18px;font-weight:normal;color:#fff;transform:scaleX(0.9810);transform-origin:center center;">Merge Into...</div>
<svg style="position:absolute;left:992px;top:257px" width="14" height="14" viewBox="0 0 14 14"><polygon points="4.100,0 9.900,0 14,4.100 14,9.900 9.900,14 4.100,14 0,9.900 0,4.100" fill="#4a1b63"/><rect x="5.800" y="2.100" width="2.500" height="2.700" fill="#fff"/><rect x="5.800" y="6.100" width="2.500" height="4.900" fill="#fff"/></svg>
<div style="position:absolute;left:834px;top:220px;width:196px;height:84px;box-sizing:border-box;border:5px solid #fb4043;filter:drop-shadow(-0.5px 2.5px 2.5px rgba(0,0,0,.6));"></div>
</body></html>
